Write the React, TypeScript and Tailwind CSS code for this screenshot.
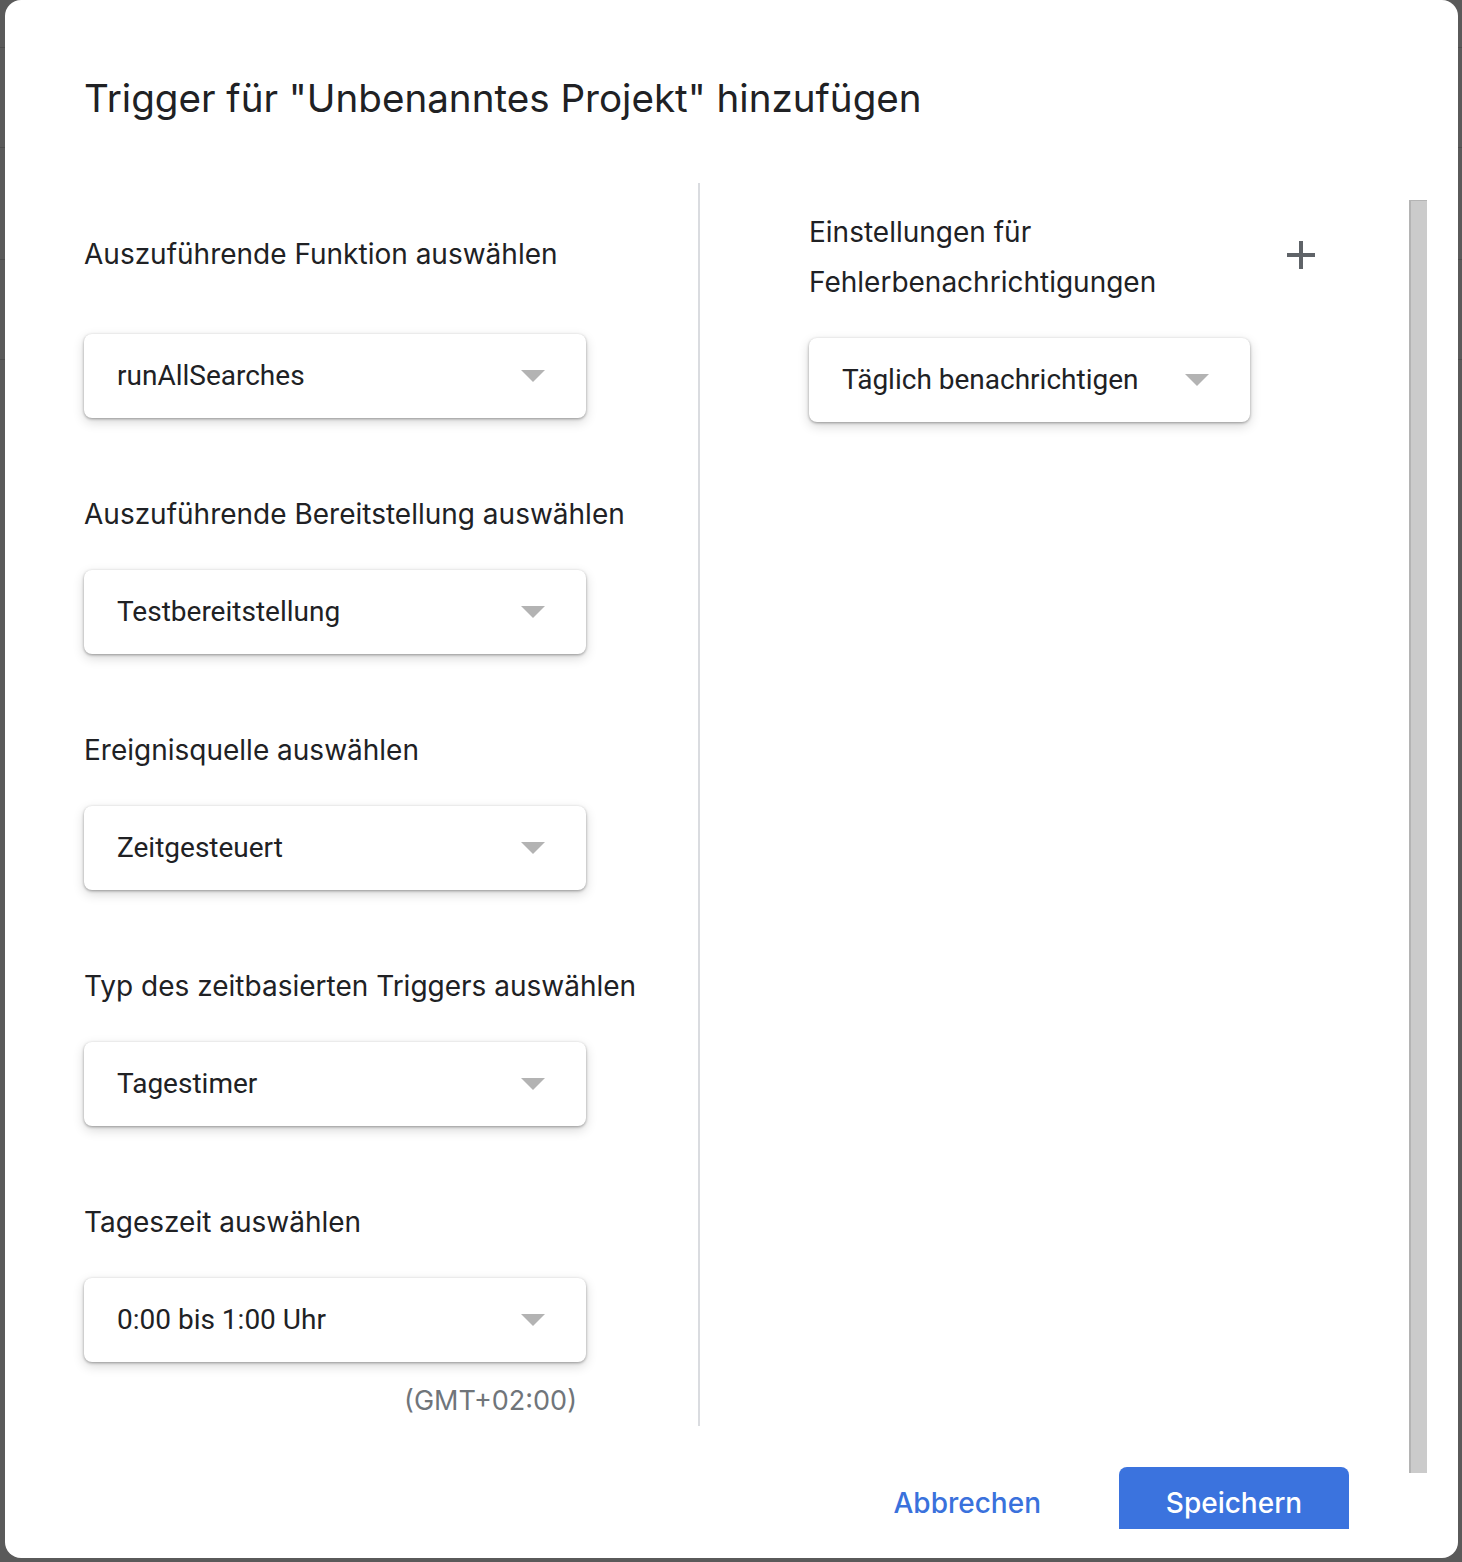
import React from 'react';

const roboto = { fontFamily: 'Roboto, "Noto Sans", Arial, sans-serif' };
const display = { fontFamily: 'Inter, Roboto, "Noto Sans", Arial, sans-serif' };

function Arrow() {
    return (
        <svg width="24" height="12" viewBox="0 0 24 12" className="shrink-0">
            <polygon points="0,0 24,0 12,12" fill="#b3b3b3" />
        </svg>
    );
}

function Select({ value, width }: { value: string; width: string }) {
    return (
        <div
            className={`${width} h-[84px] flex items-center justify-between pl-[33px] pr-[41px] bg-white rounded-[8px] shadow-[0_1px_3px_rgba(0,0,0,0.35),0_4px_12px_rgba(0,0,0,0.16)]`}
        >
            <span className="text-[28px] text-[#202124]" style={roboto}>{value}</span>
            <Arrow />
        </div>
    );
}

const fields = [
    { label: 'Auszuführende Bereitstellung auswählen', value: 'Testbereitstellung' },
    { label: 'Ereignisquelle auswählen', value: 'Zeitgesteuert' },
    { label: 'Typ des zeitbasierten Triggers auswählen', value: 'Tagestimer' },
    { label: 'Tageszeit auswählen', value: '0:00 bis 1:00 Uhr' },
];

export default function App() {
    return (
        <div className="relative w-[1462px] h-[1562px] bg-[#5a5a5a] overflow-hidden" style={display}>
            {/* page behind the dialog */}
            <div className="flex flex-col">
                <div className="h-[48px] border-b border-[#4d4d4d]" />
                <div className="h-[100px] border-b border-[#4d4d4d]" />
                <div className="h-[112px] border-b border-[#4d4d4d]" />
                <div className="h-[100px] border-b border-[#4d4d4d]" />
            </div>

            {/* dialog */}
            <div className="absolute left-[5px] top-0 w-[1453px] h-[1558px] bg-white rounded-[16px] overflow-hidden">
                <div className="relative h-[1529px] overflow-hidden">
                    <h1 className="pt-[74px] pl-[79px] text-[38.6px] leading-[48px] text-[#202124]">
                        Trigger für "Unbenanntes Projekt" hinzufügen
                    </h1>

                    <div className="flex mt-[61px] h-[1243px]">
                        {/* left column */}
                        <div className="w-[693px] pl-[79px] flex flex-col">
                            <div className="pt-[51px] text-[28px] leading-[40px] text-[#202124]">
                                Auszuführende Funktion auswählen
                            </div>
                            <div className="mt-[60px]">
                                <Select value="runAllSearches" width="w-[502px]" />
                            </div>
                            {fields.map((f) => (
                                <div key={f.label}>
                                    <div className="mt-[76px] text-[28px] leading-[40px] text-[#202124]">
                                        {f.label}
                                    </div>
                                    <div className="mt-[36px]">
                                        <Select value={f.value} width="w-[502px]" />
                                    </div>
                                </div>
                            ))}
                            <div className="w-[502px] mt-[19px] pr-[9px] text-right text-[27px] leading-[40px] text-[#70757a]">
                                (GMT+02:00)
                            </div>
                        </div>

                        {/* divider */}
                        <div className="w-[2px] bg-[#dadce0]" />

                        {/* right column */}
                        <div className="pl-[109px] flex flex-col">
                            <div className="w-[506px] pt-[24px] flex items-center justify-between">
                                <div className="text-[28px] leading-[50px] text-[#202124]">
                                    Einstellungen für
                                    <br />
                                    Fehlerbenachrichtigungen
                                </div>
                                <svg width="28" height="28" viewBox="0 0 28 28" className="-mt-[4px]">
                                    <path d="M14 0v28M0 14h28" stroke="#5f6368" strokeWidth="4" />
                                </svg>
                            </div>
                            <div className="mt-[31px]">
                                <Select value="Täglich benachrichtigen" width="w-[441px]" />
                            </div>
                        </div>
                    </div>

                    {/* footer */}
                    <div className="flex items-center justify-end pr-[109px] mt-[41px] gap-[78px]">
                        <button className="text-[28px] font-medium text-[#3a71dc]">Abbrechen</button>
                        <button className="w-[230px] h-[72px] rounded-[8px] bg-[#3b73de] text-white text-[28px] font-medium">
                            Speichern
                        </button>
                    </div>

                    {/* scrollbar */}
                    <div className="absolute left-[1404px] top-[200px] w-[18px] h-[1273px] bg-[#cbcbcb] border-l-2 border-t border-[#b4b4b4]" />
                </div>
            </div>
        </div>
    );
}
